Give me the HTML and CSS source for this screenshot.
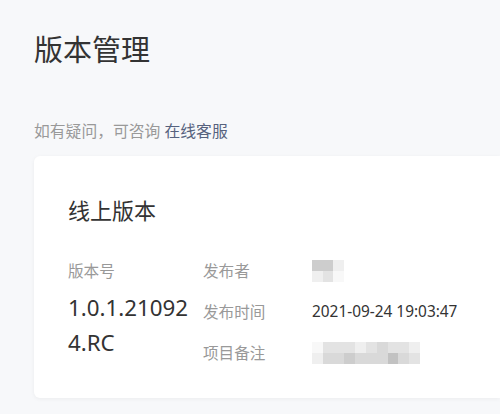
FILE: index.html
```html
<!DOCTYPE html>
<html lang="zh">
<head>
<meta charset="utf-8">
<title>版本管理</title>
<link rel="stylesheet" href="styles.css">
</head>
<body>
<main class="page">
  <h1 class="title">版本管理</h1>
  <p class="hint">如有疑问，可咨询 <a class="link" href="#">在线客服</a></p>
  <section class="card">
    <h2 class="card-title">线上版本</h2>
    <div class="details">
      <div class="version">
        <div class="label ver-label">版本号</div>
        <div class="ver-num">1.0.1.210924.RC</div>
      </div>
      <div class="info">
        <div class="label">发布者</div>
        <div class="value">
          <div class="mosaic m-small">
            <span class="c3"></span><span class="c3"></span><span class="c6"></span>
            <span class="c6"></span><span class="c5"></span><span class="c7"></span>
          </div>
        </div>
        <div class="label">发布时间</div>
        <div class="value">2021-09-24 19:03:47</div>
        <div class="label">项目备注</div>
        <div class="value">
          <div class="mosaic m-wide">
            <span class="c7"></span><span class="c5"></span><span class="c5"></span><span class="c5"></span><span class="c6"></span><span class="c5"></span><span class="c4"></span><span class="c5"></span><span class="c5"></span><span class="c6"></span>
            <span class="c6"></span><span class="c4"></span><span class="c4"></span><span class="c3"></span><span class="c4"></span><span class="c4"></span><span class="c4"></span><span class="c2"></span><span class="c4"></span><span class="c5"></span>
          </div>
        </div>
      </div>
    </div>
  </section>
</main>
</body>
</html>
```
FILE: styles.css
```css
html, body {
  margin: 0;
  padding: 0;
}
body {
  background: #f7f8fa;
  font-family: "Noto Sans", "Noto Sans CJK SC", sans-serif;
  color: #333;
  overflow: hidden;
  width: 500px;
  height: 414px;
}
.page {
  padding: 30px 0 0 34px;
}
.title {
  margin: 0;
  font-size: 29px;
  line-height: 40px;
  font-weight: 400;
  color: #333;
}
.hint {
  margin: 50px 0 0;
  font-size: 15.8px;
  line-height: 22px;
  color: #999;
}
.link {
  color: #56627e;
  text-decoration: none;
}
.card {
  margin: 14px 0 0 0;
  background: #fff;
  border-radius: 6px 0 0 6px;
  box-shadow: 0 1px 4px rgba(0, 0, 0, 0.05);
  padding: 39px 34px 25px 34px;
}
.card-title {
  margin: 0;
  font-size: 22px;
  line-height: 30px;
  font-weight: 400;
  color: #333;
}
.details {
  margin-top: 25px;
  display: flex;
}
.version {
  width: 135px;
}
.label {
  font-size: 15.6px;
  color: #999;
  height: 41px;
  display: flex;
  align-items: center;
}
.ver-label {
  height: 40px;
}
.ver-num {
  width: 128px;
  font-size: 22.3px;
  line-height: 35px;
  word-break: break-all;
  color: #333;
}
.info {
  display: grid;
  grid-template-columns: 109px auto;
  grid-auto-rows: 41px;
}
.value {
  font-size: 15.4px;
  color: #333;
  display: flex;
  align-items: center;
}
.mosaic {
  display: grid;
  grid-auto-rows: 11px;
}
.m-small {
  grid-template-columns: repeat(3, 10.5px);
}
.m-wide {
  grid-template-columns: repeat(10, 10.8px);
}
.c2 { background: #c2c2c2; }
.c3 { background: #cdcdcd; }
.c4 { background: #d9d9d9; }
.c5 { background: #e3e3e3; }
.c6 { background: #efefef; }
.c7 { background: #f8f8f8; }
```
